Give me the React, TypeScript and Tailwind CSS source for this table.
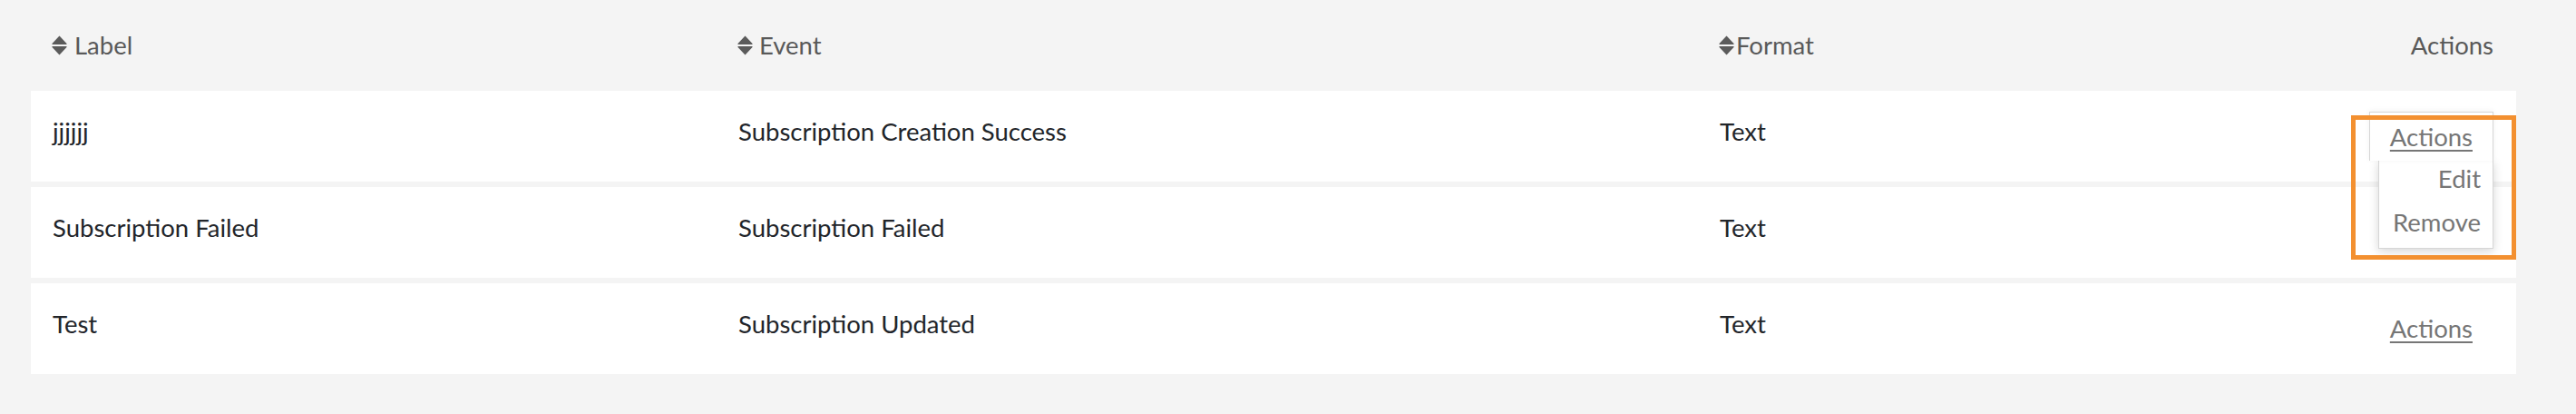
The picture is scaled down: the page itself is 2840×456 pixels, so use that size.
import React from 'react';

interface NotificationRow {
  label: string;
  event: string;
  format: string;
  open?: boolean;
}

const rows: NotificationRow[] = [
  { label: 'jjjjjj', event: 'Subscription Creation Success', format: 'Text', open: true },
  { label: 'Subscription Failed', event: 'Subscription Failed', format: 'Text' },
  { label: 'Test', event: 'Subscription Updated', format: 'Text' },
];

function SortIcon({ className = '' }: { className?: string }) {
  return (
    <svg width="17" height="22" viewBox="0 0 17 22" className={className} fill="#5b5b5b">
      <path d="M0.5 9 L8.5 0.5 L16.5 9 V10 H0.5 Z" />
      <path d="M0.5 12 H16.5 V13 L8.5 21.5 L0.5 13 Z" />
    </svg>
  );
}

function ActionsMenu({ open }: { open?: boolean }) {
  if (!open) {
    return (
      <span className="inline-block border border-transparent px-[22px] py-[6px] text-[#767676] underline underline-offset-[4px] decoration-[2px] cursor-pointer">
        Actions
      </span>
    );
  }
  return (
    <div className="relative inline-block">
      <span className="relative z-10 inline-block border border-b-0 border-[#d6d6d6] bg-white px-[22px] py-[6px] text-[#767676] underline underline-offset-[4px] decoration-[2px] shadow-[0_-1px_6px_rgba(0,0,0,0.06)] cursor-pointer">
        Actions
      </span>
      <div className="absolute right-0 top-[calc(100%-1px)] z-0 w-[127px] border border-[#d6d6d6] bg-white shadow-[0_3px_10px_rgba(0,0,0,0.16)]">
        <div className="flex h-[48px] items-center justify-end pb-[10px] pr-[13px] text-[#767676]">Edit</div>
        <div className="flex h-[48px] items-center justify-end pb-[10px] pr-[13px] text-[#767676]">Remove</div>
      </div>
    </div>
  );
}

export default function App() {
  return (
    <div className="h-[456px] w-[2840px] bg-[#f4f4f4] pl-[34px] pr-[66px] font-['Lato',sans-serif] text-[27.5px]">
      <div className="grid h-[100px] grid-cols-[756px_1082px_1fr_auto] items-center pl-[23px] pr-[25px] text-[#595959]">
        <div className="flex items-center">
          <SortIcon className="mr-[8px]" />
          <span>Label</span>
        </div>
        <div className="flex items-center">
          <SortIcon className="mr-[7px]" />
          <span>Event</span>
        </div>
        <div className="flex items-center">
          <SortIcon className="mr-[2px]" />
          <span>Format</span>
        </div>
        <div>Actions</div>
      </div>

      <div className="relative flex flex-col gap-[6px]">
        {rows.map((row) => (
          <div
            key={row.label}
            className="grid h-[100px] grid-cols-[756px_1082px_1fr_auto] items-center bg-white pl-[24px] pr-[25px] text-[#22252a]"
          >
            <div className="pb-[10px]">{row.label}</div>
            <div className="pb-[10px]">{row.event}</div>
            <div className="pb-[10px]">{row.format}</div>
            <div>
              <ActionsMenu open={row.open} />
            </div>
          </div>
        ))}

        <div className="pointer-events-none absolute left-[2558px] top-[27px] z-20 h-[159px] w-[182px] border-[5px] border-[#f39030]" />
      </div>
    </div>
  );
}
